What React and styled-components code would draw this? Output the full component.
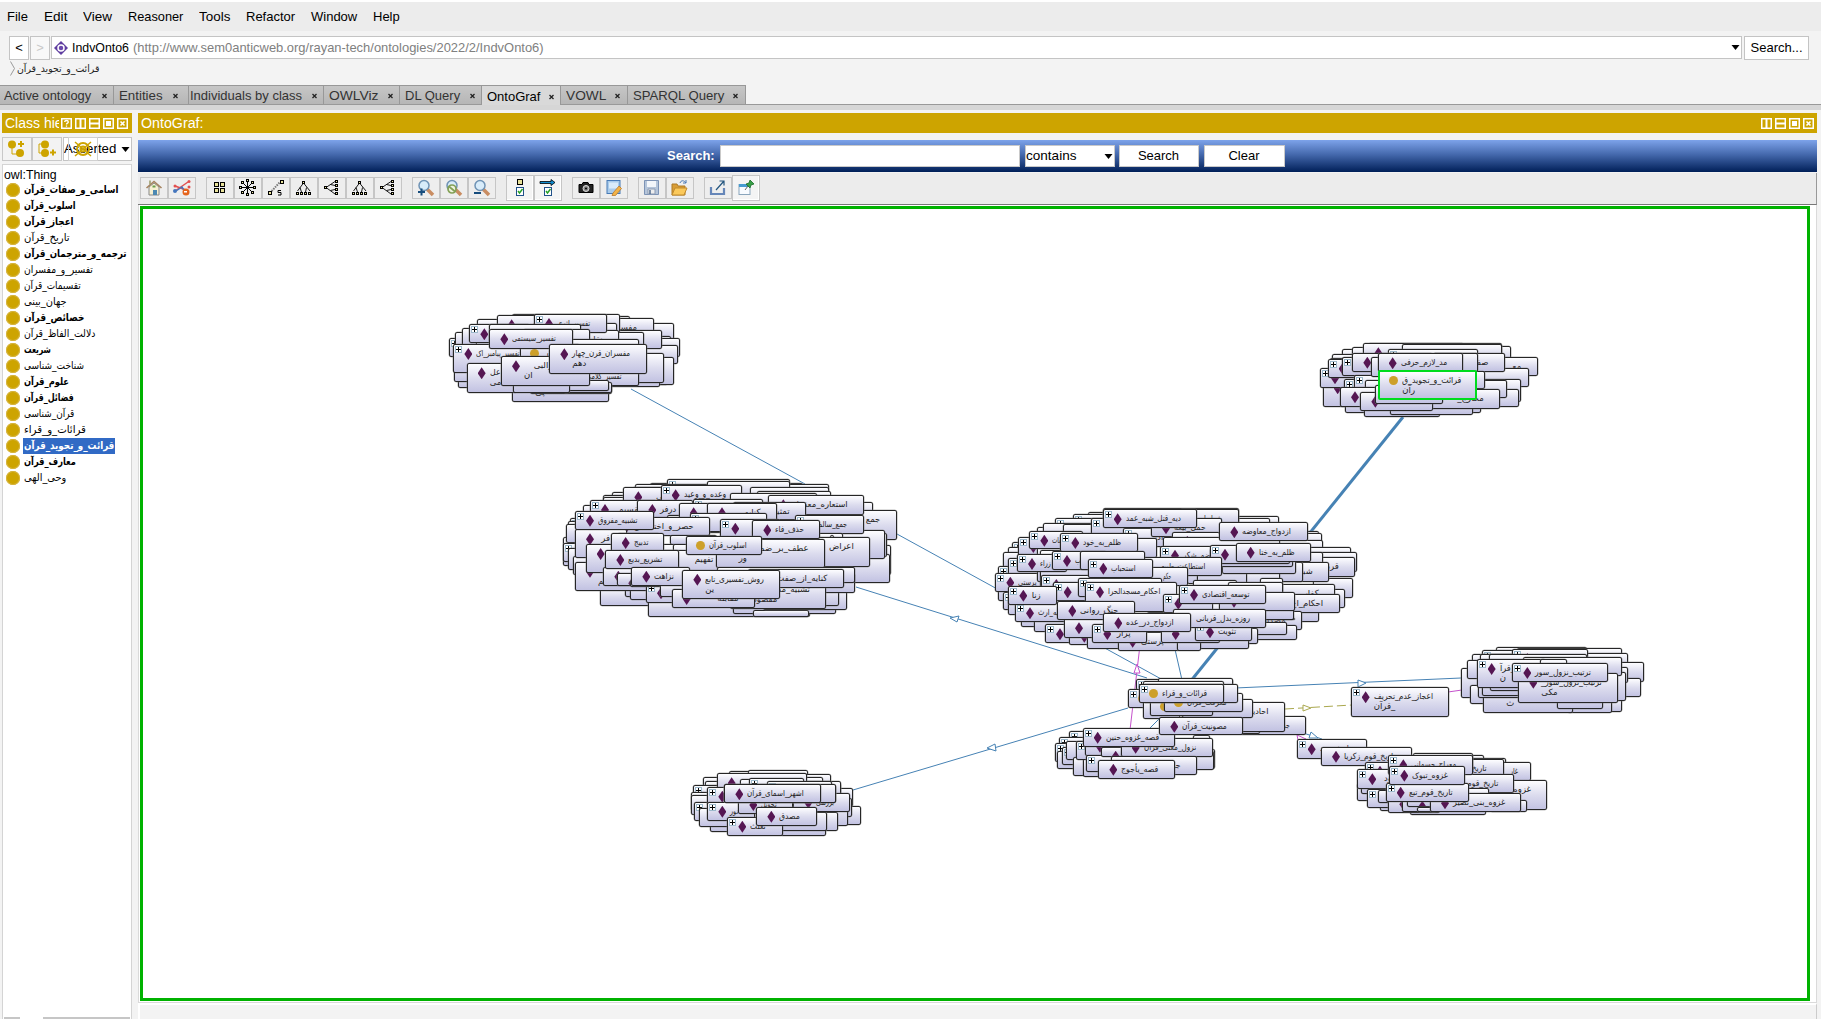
import React, { useLayoutEffect, useRef, useState } from "react";
import styled, { createGlobalStyle, css } from "styled-components";

const GlobalStyle = createGlobalStyle`
  * { box-sizing: border-box; }
  body { margin: 0; background: #f3f3f3; overflow: hidden; }
`;

const latin = `"Liberation Sans", Arial, sans-serif`;
const arabic = `"DejaVu Sans", "Noto Sans", sans-serif`;

const Shell = styled.div`
  width: 1821px;
  height: 1019px;
  overflow: hidden;
  display: flex;
  flex-direction: column;
  font: 13px/16px ${latin};
  color: #000;
  background: #f3f3f3;
`;

/* ---------- text squeezed to a known width ---------- */
const FitBox = styled.span`
  display: block;
  flex: none;
  width: ${(p) => p.$w}px;
  white-space: nowrap;
  direction: ltr;
  text-align: left;
`;
const FitInner = styled.span`
  display: inline-block;
  transform-origin: 0 50%;
`;
/* with `max`, text never stretches past that factor and keeps to the right edge instead */
function Fit({ w, max, children }) {
  const ref = useRef(null);
  const [fit, setFit] = useState({ s: 1, pad: 0 });
  useLayoutEffect(() => {
    const own = ref.current ? ref.current.offsetWidth : 0;
    if (!own) return;
    const s = max ? Math.min(max, w / own) : w / own;
    setFit({ s, pad: Math.max(0, w - own * s) });
  }, [w, max, children]);
  return (
    <FitBox $w={w}>
      <FitInner ref={ref} style={{ transform: `translateX(${fit.pad}px) scaleX(${fit.s})` }}>
        <bdi>{children}</bdi>
      </FitInner>
    </FitBox>
  );
}

/* ---------- menu, address row, breadcrumb ---------- */
const MenuBar = styled.div`
  height: 31px;
  flex: none;
  border-top: 2px solid #fff;
  background: #ececec;
  display: flex;
  align-items: center;
  gap: 16px;
  padding-left: 7px;
`;
const AddressRow = styled.div`
  height: 30px;
  flex: none;
  padding: 5px 0 0 9px;
  display: flex;
  gap: 1px;
`;
const NavButton = styled.div`
  width: ${(p) => p.$w || 20}px;
  height: 24px;
  border: 1px solid #c4c4c4;
  background: ${(p) => (p.$off ? "#f8f8f8" : "#fff")};
  color: ${(p) => (p.$off ? "#c8c8c8" : "#000")};
  display: flex;
  align-items: center;
  justify-content: center;
`;
const Address = styled.div`
  width: 1691px;
  height: 23px;
  margin: 0 1px 0 0;
  border: 1px solid #c4c4c4;
  background: #fff;
  display: flex;
  align-items: center;
  padding-left: 2px;
  color: #808080;
  b { font-weight: 400; color: #000; margin: 0 4px 0 4px; }
  & > svg:last-child { margin-left: auto; margin-right: 1px; }
`;
const Crumb = styled.div`
  height: 24px;
  flex: none;
  padding: 0 0 0 10px;
  display: flex;
  align-items: flex-start;
  font: 10px/16px ${arabic};
  color: #222;
  gap: 2px;
`;
const Tabs = styled.div`
  height: 20px;
  flex: none;
  display: flex;
  border-bottom: 1px solid #999;
`;
const Tab = styled.div`
  width: ${(p) => p.$w}px;
  height: ${(p) => (p.$on ? 20 : 19)}px;
  border: 1px solid #989898;
  border-width: 1px 1px 0 0;
  background: ${(p) => (p.$on ? "#d9d9d9" : "linear-gradient(#c6c6c6, #b6b6b6)")};
  color: ${(p) => (p.$on ? "#000" : "#333")};
  display: flex;
  align-items: center;
  justify-content: space-between;
  padding: 2px ${(p) => p.$pr ?? 6}px 0 ${(p) => p.$pl ?? 5}px;
`;
const TabStrip = styled.div`
  height: 5px;
  flex: none;
  background: #d6d6d6;
`;

/* ---------- panels ---------- */
const Main = styled.div`
  flex: 1;
  min-height: 0;
  display: flex;
  gap: 6px;
  padding: 3px 0 0 2px;
`;
const Column = styled.div`
  width: ${(p) => p.$w}px;
  display: flex;
  flex-direction: column;
`;
const TitleBar = styled.div`
  height: 20px;
  flex: none;
  background: #cda400;
  color: #fff;
  display: flex;
  align-items: center;
  justify-content: space-between;
  padding: 0 ${(p) => p.$pr ?? 4}px 0 3px;
  font-size: 14px;
`;
const TitleText = styled.div`
  width: ${(p) => p.$w}px;
  overflow: hidden;
  white-space: nowrap;
`;
const TitleIcons = styled.div`
  display: flex;
  gap: 3px;
`;
const ClassTools = styled.div`
  position: relative;
  height: 24px;
  flex: none;
  margin: 4px 0 3px;
  display: flex;
`;
const ClassButton = styled.div`
  width: 30px;
  border: 1px solid #c8c8c8;
  display: flex;
  align-items: center;
  justify-content: center;
  background: #f3f3f3;
`;
const Combo = styled.div`
  width: 69px;
  margin-left: 1px;
  border: 1px solid #c4c4c4;
  background: #fff;
  display: flex;
  align-items: center;
  justify-content: space-between;
  padding-right: 1px;
`;
const Overlap = styled.div`
  position: absolute;
  left: 66px;
  top: 0;
  width: 30px;
  height: 24px;
  border: 1px solid #d0d0d0;
  display: flex;
  align-items: center;
  justify-content: center;
`;
const Tree = styled.div`
  flex: 1;
  border: 1px solid #d4d4d4;
  border-bottom: 0;
  background: #fff;
  padding-top: 2px;
  display: flex;
  flex-direction: column;
`;
const Root = styled.div`
  height: 15px;
  line-height: 16px;
  padding-left: 1px;
`;
const TreeRow = styled.div`
  height: 16px;
  display: flex;
  align-items: center;
  gap: 3px;
  padding-left: 3px;
`;
const Dot = styled.i`
  width: 14px;
  height: 14px;
  border-radius: 50%;
  background: #cda400;
  box-shadow: inset 0 0 0 1px #d6b440;
`;
const TreeLabel = styled.div`
  font: ${(p) => (p.$b ? 700 : 400)} 10.5px/15px ${arabic};
  height: 16px;
  padding: 0 1px;
  color: ${(p) => (p.$sel ? "#fff" : "#000")};
  background: ${(p) => (p.$sel ? "#316ac5" : "transparent")};
`;
const ScrollBits = styled.div`
  margin-top: auto;
  height: 2px;
  display: flex;
  gap: 23px;
  padding: 0 1px;
  i { background: #c6c6c6; width: 16px; }
  i + i { flex: 1; }
`;

/* ---------- OntoGraf ---------- */
const SearchBar = styled.div`
  height: 32px;
  flex: none;
  margin-top: 7px;
  background: linear-gradient(#7da3ea, #4569ad 45%, #001f58);
  display: flex;
  align-items: center;
  padding: 0 0 0 529px;
`;
const SearchLabel = styled.div`
  color: #fff;
  font-weight: 700;
  width: 53px;
`;
const SearchField = styled.div`
  width: ${(p) => p.$w}px;
  height: 22px;
  margin-right: ${(p) => p.$mr}px;
  border: 1px solid #c9c9c9;
  background: #fff;
  display: flex;
  align-items: center;
  justify-content: ${(p) => p.$j || "center"};
  padding: 0 1px 0 0;
`;
const ToolBar = styled.div`
  height: 32px;
  flex: none;
  margin-top: 1px;
  background: #ececec;
  border-right: 1px solid #999;
  border-bottom: 1px solid #777;
  display: flex;
  align-items: center;
  gap: 10px;
  padding: 0 0 1px 2px;
`;
const ToolGroup = styled.div`
  display: flex;
  align-items: center;
`;
const Tool = styled.div`
  width: 28px;
  height: ${(p) => (p.$on ? 26 : 22)}px;
  border: 1px solid #c6c6c6;
  background: ${(p) => (p.$on ? "#f4f4f4" : "#eee")};
  ${(p) => p.$on && css`box-shadow: inset -1px -1px #fff;`}
  display: flex;
  align-items: center;
  justify-content: center;
`;
const Frame = styled.div`
  height: 798px;
  flex: none;
  border: 1px solid #dadada;
  border-top-width: 0;
  background: #fff;
  padding: 1px 6px 1px 1px;
  display: flex;
`;
const Canvas = styled.div`
  position: relative;
  flex: 1;
  border: 3px solid #00b200;
  background: #fff;
  overflow: hidden;
`;
const Footer = styled.div`
  flex: 1;
  border-top: 2px solid #fff;
  border-left: 2px solid #fff;
  border-right: 1px solid #ccc;
  background: #f3f3f3;
`;
const Edges = styled.svg`
  position: absolute;
  inset: 0;
`;

const U = 1 / 3;
const NodeBox = styled.div`
  position: absolute;
  left: ${(p) => p.$x}px;
  top: ${(p) => p.$y}px;
  width: ${(p) => p.$w}px;
  height: ${(p) => p.$h}px;
  border: ${(p) => (p.$hot ? "2px solid #00dc1e" : "1px solid #262626")};
  border-radius: 2px;
  box-shadow: ${(p) => (p.$hot ? "none" : "0 0 0 .3px #777")};
  background: linear-gradient(#fdfdff, #dcdcee 50%, #c2c2e2);
  overflow: hidden;
`;
const NodeIcon = styled.i`
  position: absolute;
  left: ${(p) => (p.$round ? 9 : 10)}px;
  top: ${(p) => (p.$round ? 4 : 3)}px;
  width: ${(p) => (p.$round ? 9 : 8)}px;
  height: ${(p) => (p.$round ? 9 : 12)}px;
  background: ${(p) => (p.$round ? "#cda02a" : "#551653")};
  ${(p) => (p.$round ? "border-radius: 50%;" : "clip-path: polygon(50% 0, 100% 50%, 50% 100%, 0 50%);")}
`;
const Plus = styled.i`
  position: absolute;
  left: 1px;
  top: 1px;
  width: 7px;
  height: 7px;
  border: 1px solid #9cb9cc;
  background: linear-gradient(#000, #000) center / 5px 1px no-repeat,
    linear-gradient(#000, #000) center / 1px 5px no-repeat, #fff;
`;
const NodeText = styled.div`
  position: absolute;
  left: 22px;
  top: 3px;
  font: 8.5px/10px ${arabic};
  color: #222;
  white-space: nowrap;
  text-align: left;
`;

/* node: left, top, right, bottom (thirds of a pixel), marks, line 1, line 2 */
const clusters = [
  { x: 1040, y: 640, nodes: [
    [288,118,580,175,"+"],[355,115,580,170],[265,147,500,205,"+c"],[310,180,420,238],
    [600,228,798,286,"","جمع_قرآن"],[430,230,660,282],[545,187,734,275,"","احادیث"],[425,187,600,275],[425,178,638,235],
    [330,170,520,228,"c"],[372,160,608,217,"c","معرفت_قرآن"],[310,124,551,182],[310,133,595,190],
    [297,133,551,190,"+c","قرائات_و_قراء"],
    [88,272,300,330,"+"],[58,292,250,350,"+"],[45,310,240,367,"+"],[50,333,240,388],[65,320,250,376,"+"],
    [77,302,250,360],[100,350,300,407],[130,355,300,412],[350,328,526,386],[400,333,522,390],[460,285,510,330],
    [108,302,250,359,"+"],[135,290,330,347,"d"],[139,345,300,397,"+"],[182,320,300,350,"d"],
    [242,293,518,350,"d","نزول_معنی_قرآن"],[213,347,472,404,"","جالوت"],
    [128,263,405,320,"+d","قصه_غزوه_حنین"],[175,359,404,416,"d","قصه_یأجوج"],[358,230,610,286,"d","مصونیت_قرآن"],
    [932,142,1228,230,"+d","اعجاز_عدم_تحریف","_قرآن"],
    [770,298,982,356,"+d","تاریخ_یهود"],[843,320,1116,377,"d","تاریخ_قوم_زکریا"],
    [1200,345,1332,400],[1290,353,1397,410],[1340,365,1472,424,"","غار"],[1180,358,1391,415,"","تاریخ_روم"],
    [1118,338,1298,395,"+"],[1300,421,1522,510,"","غزوه_احد"],[1160,402,1423,459,"","تاریخ_قوم_لوط"],
    [975,365,1080,420,"+d"],[952,430,1080,483],[962,410,1080,463],[952,388,1120,446,"+d","هود"],
    [1020,490,1160,512],[1110,500,1337,524],[1350,480,1462,515],[982,447,1100,504,"+"],[1015,450,1100,488],
    [1045,463,1200,520,"d"],[1085,465,1200,517],[1102,470,1200,502,"d"],[1132,500,1190,516],[1240,445,1347,500],
    [1045,346,1298,404,"+d","معراج_جسمانی"],[1170,460,1444,517,"d","غزوه_بنی_نضیر"],
    [1037,428,1287,485,"+d","تاریخ_قوم_تبع"],[1048,377,1274,434,"+d","غزوه_تبوک"],
  ]},
  { x: 430, y: 300, nodes: [
    [247,219,536,307,"","","پی"],[300,225,545,283],[58,113,350,170,"+d"],[500,70,732,130],[560,107,722,160],
    [560,113,751,170],[560,135,743,192],[500,205,715,255],[500,170,733,256],[400,206,690,262],[75,95,300,150],[95,84,300,140],[155,67,420,115],
    [142,58,420,115],[85,207,400,264],[72,190,400,245],[440,48,600,100],[450,54,671,112,"","مفسران"],[470,90,695,146],
    [245,42,570,98],[200,46,400,104,"d","نمونه"],[138,97,260,155,"+"],[118,73,300,130,"+d"],[480,68,560,110],[450,97,643,150],
    [380,90,568,148,"","نقلی"],[312,42,530,100,"+d","تفسیر_اثری"],[176,73,452,130],[280,88,479,150],[400,118,626,175],
    [560,160,701,250],[70,132,318,220,"+d","تفسیر_پیامبر_اک",""],[270,132,450,190,"c","قرآن"],
    [400,200,626,258,"","تفسیر_کلامی"],[400,245,545,280],[400,240,536,272],[110,190,261,279,"d","عل","می"],[250,190,421,279],
    [178,88,428,146,"d","تفسیر_سیستمی"],[213,169,480,258,"d","عقیدة_البی","ان"],
    [358,133,650,221,"d","مفسران_قرن_چهار","دهم"],
  ]},
  { x: 550, y: 470, nodes: [
    [300,38,760,95],[352,28,720,88,"+"],[255,43,480,100],[245,50,480,105],[620,43,838,100],[470,32,719,90],[600,50,838,100],[620,62,842,118],
    [187,66,420,120],[160,74,400,130,"+"],[160,82,380,130],[100,105,300,160],[60,145,200,200,"+"],[53,153,200,210],
    [40,200,150,288],[47,163,150,220],[860,97,968,150],[820,120,1041,209,"","جمع"],
    [860,225,1024,315],[840,252,1019,340],
    [860,190,1012,262],[780,180,1004,268,"","تضمین"],[40,218,200,276,"+d"],[55,235,200,300],
    [68,258,200,315],[150,352,366,409,"","تنکیت"],[225,340,400,380],[240,345,400,391],[295,385,780,441],[550,378,858,433],[610,420,778,441],
    [640,355,891,419],[620,352,866,409],[690,310,916,368],[540,330,829,418,"","تشبیه_مقلوب","مقصود"],
    [75,275,365,364,"d","","لم"],[288,340,440,398,"+d"],[220,52,400,110,"d","کی"],
    [332,46,577,103,"+d","وعده_و_وعید"],[540,69,800,126],[655,76,942,134,"d","استعاره_معقول"],
    [120,90,320,147,"+d","تقسیم"],[262,90,430,147,"d","درفر"],[350,135,560,190],[428,86,640,143,"+"],[386,100,560,157,"d"],
    [548,96,768,150,"","تمثیل"],[471,100,680,158,"d","کنایه"],[420,128,650,185,"+"],
    [736,136,942,193,"+","جمع_سالم"],[760,190,880,235],[184,141,480,198,"d","حصر_و_اختصاص"],[75,178,230,265,"d","فر"],[200,190,330,265],
    [75,122,311,179,"+d","تشبیه_مفروق"],[511,146,690,203,"+d","نعم"],[360,195,500,225],[840,195,852,290],
    [640,202,961,290,"","اعراض"],[107,222,378,310,"d"],[370,222,420,280],[340,240,540,310,"","تفهیم"],[497,206,824,293,"","عطف_بر_ضم","ور"],
    [607,151,811,208,"d","حذف_فاء"],[182,189,343,245,"d","تدبیج"],[407,197,637,254,"c","اسلوب_قرآن"],
    [500,290,916,340],[595,298,881,355,"","کنایه_از_صفت"],[160,290,360,347,"d"],[202,310,360,347,"d"],[240,330,370,351],
    [166,240,388,297,"d","تشریع_بدیع"],[330,340,420,382],[365,357,614,414,"d","مقابله"],[244,290,421,347,"d","نزاهت"],
    [397,299,691,387,"d","روش_تفسیری_تابع","ین"],
  ]},
  { x: 980, y: 495, nodes: [
    [325,52,600,110,"+"],[280,58,500,110,"+"],[225,70,500,125,"+"],[730,62,896,118],[700,68,869,120],[370,38,776,95],
    [170,95,400,150],[190,85,400,140],[250,87,420,140],[333,70,500,127,"+"],[900,108,1018,160],[900,115,1026,170],[860,135,1030,200],
    [95,140,240,197,"+"],[85,155,240,212],[70,172,240,229],[115,126,240,183,"+d"],[900,157,1112,215],[900,171,1130,230],
    [70,235,180,310],[1000,250,1118,308],[900,187,1125,245,"","قربانی"],[55,213,180,270,"+"],[85,190,200,247,"+"],
    [55,260,200,318],[70,290,220,346,"+"],[85,303,250,360,"+"],[46,233,220,290,"+d","پرستی"],
    [900,282,1095,340],[850,268,1065,325,"","کفار"],[820,320,1017,380],[830,298,1079,355,"","احکام_اع"],
    [740,348,965,404,"","مصداق"],[780,390,950,434],[700,380,922,420],[640,400,834,446],[640,405,806,461],
    [122,340,300,397],[162,355,300,412],[195,388,330,445,"+d"],[268,395,450,449,"d"],[322,405,500,462],
    [105,325,290,382,"+d","آیه_ارث"],[600,42,776,100,"","شرایط"],[170,150,500,260],[180,165,400,300],
    [148,107,310,163,"+d","صفات"],[430,100,600,157,"+","ادبی"],[513,70,725,127,"d","حمل_بیعه"],
    [577,110,719,167,"d"],[450,130,530,190],[550,125,900,200],[368,43,650,100,"+d","دیه_قتل_شبه_عمد"],
    [718,82,984,139,"d","ازدواج_معاوضه"],[241,114,473,171,"+d","ظلم_به_خود"],[111,177,262,232,"+d","زراء"],
    [880,170,1030,228],[860,202,1046,260,"","شبایت"],[720,200,970,260],[740,210,840,290],[780,225,900,280],
    [620,210,751,267],[650,200,800,275],[840,250,910,310],[725,180,948,237],[540,152,742,210,"+d","ضم_شکر"],[690,160,938,217],
    [690,149,930,207,"+d"],[460,185,725,242,"","استطاعت_طبیعی"],[216,168,380,225,"+d","واجب"],[300,168,496,225],
    [480,215,623,272,"","حکم"],[767,143,992,200,"d","ظلم_به_ختا"],[184,240,400,295,"+d"],[218,262,400,319,"+d"],
    [640,255,770,320],[295,248,545,305,"+"],[325,191,518,248,"+d","استحباب"],[500,350,700,420],[620,370,945,374],[690,320,943,375],
    [745,262,908,319],[717,290,945,347,"d"],[315,262,590,350,"+d","احکام_مسجدالحرا","م"],
    [550,296,700,353,"+d"],[597,270,857,327,"+d","توسعه_اقتصادی"],
    [413,410,600,467,"d","پرستی"],[590,410,663,467],[252,370,400,428,"d"],[337,387,502,443,"+d","پرار"],
    [542,387,720,444,"d"],[645,382,817,438,"+d","تثویت"],[580,343,859,398,"","روزه_بدل_قربانی"],
    [85,272,231,329,"+d","زنا"],[232,318,466,375,"d","جنگ_روانی"],[370,355,632,412,"d","ازدواج_در_عده"],
  ]},
  { x: 1300, y: 330, nodes: [
    [205,38,492,95],[127,58,400,115],[155,50,400,107],[400,48,632,105],[95,73,300,130],[520,80,713,139,"","مع"],
    [400,115,686,172],[90,84,300,140],[68,145,300,232,"d"],[60,115,300,173,"+d"],[400,148,662,215],[400,178,658,230],[500,150,620,205],
    [136,193,400,250],[192,200,420,260],[280,200,543,248],[83,86,250,143,"+d"],[125,80,300,137,"+"],[133,148,300,200,"+"],
    [190,40,605,97,"d"],[307,43,605,100],[265,58,534,115,"+"],[400,70,614,127,"","صف"],[157,68,400,125,"d"],
    [162,135,300,190,"+"],[212,82,450,140],[300,122,556,178],[194,150,400,199],[120,172,350,230,"d"],[271,198,518,255],
    [345,178,599,236,"","مخارج_"],[181,185,400,242,"d"],[226,165,428,222],[400,70,534,127],[233,70,490,127,"d","مد_لازم_حرفی"],
    [235,120,530,211,"c!","قرائت_و_تجوید_ق","رآن"],
  ]},
  { x: 1440, y: 635, nodes: [
    [168,35,440,92],[230,40,546,98],[125,44,300,100,"+"],[97,58,300,115],[63,98,300,188],[90,150,300,208],
    [82,75,300,133],[400,55,565,110],[400,82,611,140],[400,130,602,185],[400,95,565,145],[350,190,545,230],[350,110,558,198],[380,178,515,235],
    [130,147,398,235,"","","ث"],[350,165,490,223],[120,57,440,115],[217,42,443,98,"+d"],[148,57,440,115],[250,65,546,122],
    [115,133,300,190],[125,125,300,182],[150,110,300,167],[110,72,318,160,"+d","سور_قرآ","ن"],[300,72,380,160],
    [235,113,535,203,"d","ترتیب_نزول_سور_","مکی"],[217,84,503,142,"+d","ترتیب_نزول_سور"],
  ]},
  { x: 680, y: 760, nodes: [
    [148,32,380,90],[205,30,383,88],[70,50,300,110],[75,63,300,120],[250,42,453,100],[265,50,430,108],[40,75,200,130,"+"],
    [33,95,200,152,"d"],[33,105,200,165],[90,158,300,215],[70,140,300,198],[43,125,200,183,"+"],[58,143,200,200],
    [400,83,520,140],[450,138,542,194],[400,70,484,128],[320,63,484,120],[400,115,515,170],[400,130,503,198],[350,155,475,212],[300,172,438,229],
    [300,155,440,213],[110,40,380,97,"d"],[180,58,300,110],[208,53,373,110,"+"],[260,62,455,120,"+"],[340,98,511,155,"d","بررسی"],
    [330,75,469,128],[82,80,300,137,"+d"],[82,125,225,182,"+d","نور"],[175,105,340,163,"d","تخویل"],
    [133,73,469,130],[133,73,422,130,"d","اشهر_اسمای_قرآن"],[142,170,308,229,"+d","تعلث"],[229,140,410,198,"d","مصدق"],
  ]},
];

const CX = 143;
const CY = 209;

function Node({ ox, oy, n }) {
  const [x1, y1, x2, y2, marks = "", a, b] = n;
  const hot = marks.includes("!");
  return (
    <NodeBox $x={ox + x1 * U - CX} $y={oy + y1 * U - CY} $w={(x2 - x1) * U} $h={(y2 - y1) * U} $hot={hot}>
      {marks.includes("+") && <Plus />}
      {/[dc]/.test(marks) && <NodeIcon $round={marks.includes("c")} />}
      {(a || b) && (
        <NodeText>
          {a ? <Fit w={Math.max(8, (x2 - x1 - 118) * U)} max={1}>{a}</Fit> : <br />}
          {b && <bdi>{b}</bdi>}
        </NodeText>
      )}
    </NodeBox>
  );
}

const blue = "#4682b4";
function Graph() {
  return (
    <Canvas>
      <Edges width="1663" height="789" viewBox="143 209 1663 789" fill="none" stroke={blue} strokeWidth="1">
        <path d="M631 389L805 484M897 534L1163 680M856 587L1147 678M1128 708L853 790M1174 645L1182 680M1235 688L1461 678M1148 730L1160 718M1300 732L1322 739" />
        <path d="M1403 417L1190 682" strokeWidth="3" />
        <path d="M1140 645L1130 730M1448 692L1462 690" stroke="#c552cc" />
        <path d="M1285 709L1352 705" stroke="#aaa84e" strokeDasharray="9 4" />
        <path d="M950 618L959 616L957 622zM987 748L995 744L996 751zM1358 680L1366 683L1358 687zM1311 732L1318 738L1309 738z" fill="#fff" />
        <path d="M1137 664L1134 673L1140 673zM1297 735L1306 739L1298 740z" stroke="#c552cc" fill="#fff" />
        <path d="M1303 705L1311 708L1303 711z" stroke="#aaa84e" fill="#fff" />
      </Edges>
      {clusters.map((c, i) => c.nodes.map((n, j) => <Node key={`${i}-${j}`} ox={c.x} oy={c.y} n={n} />))}
    </Canvas>
  );
}

/* ---------- icons ---------- */
const Caret = () => (
  <svg width="9" height="5" viewBox="0 0 9 5"><path d="M.5 0h8L4.500 5z" fill="#000" /></svg>
);
function WinIcon({ kind }) {
  const d = {
    help: "",
    split: "M5.500 1v9",
    dash: "M1 5.500h9",
    max: "",
    close: "M3.500 3.500l4 4M7.500 3.500l-4 4",
  }[kind];
  return (
    <svg width="11" height="11" viewBox="0 0 11 11" fill="none" stroke="#fff">
      <rect x=".75" y=".75" width="9.500" height="9.500" strokeWidth="1.500" />
      {kind === "max" && <rect x="3" y="3" width="5" height="5" fill="#fff" stroke="none" />}
      {kind === "help" && <path d="M3.700 4c0-2 3.600-2 3.600 0 0 1.300-1.800 1-1.800 2.500M5.500 7.500v1.200" strokeWidth="1.300" />}
      <path d={d} strokeWidth={kind === "close" ? 1.6 : 2} />
    </svg>
  );
}
const sq = (x, y, s = 3) => <rect key={`${x},${y}`} x={x + 0.5} y={y + 0.5} width={s} height={s} fill="#e8e29a" stroke="#000" />;
const dot = (x, y) => <rect key={`${x},${y}`} x={x + 0.5} y={y + 0.5} width="2" height="2" fill="#e8e29a" stroke="#000" />;
const lens = (
  <g><path d="M10 10l6 6" stroke="#c98d62" strokeWidth="3.500" /><circle cx="7" cy="6.500" r="5" fill="#d8ecfa" stroke="#6f93b5" strokeWidth="1.500" /></g>
);
const glyphs = {
  home: <g><path d="M4 8v8h10V8L9 4z" fill="#f7f0d2" stroke="#888" /><path d="M1.500 9L9 2.500 16.500 9" fill="none" stroke="#a68460" strokeWidth="1.600" /><rect x="8" y="11" width="4" height="5" fill="#4d89b3" /><rect x="7.500" y="6.500" width="3" height="2" fill="#6a9e4d" /><path d="M5 1.500v4" stroke="#996" strokeWidth="1.500" /></g>,
  net: <g fill="none" strokeWidth="1.500"><path d="M2 7l11 4M2 12L15 3" stroke="#e34f4f" /><path d="M3 12l6-4 3 5" stroke="#4576bd" /><g stroke="none"><circle cx="2" cy="7" r="1.500" fill="#e34f4f" /><circle cx="16" cy="2.500" r="1.500" fill="#e34f4f" /><circle cx="2" cy="12" r="2" fill="#4576bd" /><circle cx="16" cy="8" r="1.500" fill="#e34f4f" /><circle cx="13" cy="13" r="3.500" fill="#e5641c" /><rect x="11" y="12" width="3" height="1.500" fill="#fff" /></g></g>,
  grid: <g>{sq(3, 3, 4)}{sq(9, 3, 4)}{sq(3, 9, 4)}{sq(9, 9, 4)}</g>,
  star: <g><path d="M8.500 2v14M2 8.500h14M3 3l11 11M14 3L3 14" stroke="#000" />{[[7, 0], [7, 14], [0, 7], [14, 7], [2, 2], [12, 2], [2, 12], [12, 12]].map(([x, y]) => sq(x, y, 2))}</g>,
  spring: <g><path d="M3 14L13 3" stroke="#777" strokeWidth="2" strokeDasharray="1.500 1" />{sq(1, 12)}{sq(13, 1)}<path d="M14 11.500h-3v2h3v2.500h-3" stroke="#000" fill="none" /></g>,
  down: <g><path d="M8.500 4L2.500 12M5 8.500L6.500 13M11.500 8.500L10.500 13M8.500 4L15 12" stroke="#000" fill="none" strokeWidth=".9" />{dot(7, 2)}{dot(1, 13)}{dot(5, 13)}{dot(9, 13)}{dot(13, 13)}</g>,
  left: <g><path d="M3 8.500L12 2.500M7.500 5.500L12 6.500M7.500 11.500L12 10.500M3 8.500L12 15" stroke="#000" strokeWidth=".9" />{dot(1, 7)}{dot(12, 1)}{dot(12, 5)}{dot(12, 9)}{dot(12, 13)}</g>,
  zin: <g>{lens}<path d="M1 13h7M4.500 9.500v7" stroke="#174d7d" strokeWidth="2" /></g>,
  zno: <g>{lens}<circle cx="7" cy="10" r="4" fill="#edf3de" stroke="#83a056" strokeWidth="1.700" /><path d="M4 7.500l6 5" stroke="#83a056" strokeWidth="1.700" /></g>,
  zout: <g>{lens}<path d="M1 14h7" stroke="#174d7d" strokeWidth="2" /></g>,
  ncheck: <g>{sq(6, 0, 5)}<rect x="5.500" y="8.500" width="7" height="8" fill="#fff" stroke="#22528a" /><path d="M7 12l1.500 2 3-4" stroke="#25a025" strokeWidth="1.400" fill="none" /></g>,
  acheck: <g><path d="M1 2.500h11V.5l4 3-4 3v-2H1z" fill="#118dd1" stroke="#000" strokeWidth=".8" /><rect x="5.500" y="8.500" width="7" height="8" fill="#fff" stroke="#22528a" /><path d="M7 12l1.500 2 3-4" stroke="#25a025" strokeWidth="1.400" fill="none" /></g>,
  camera: <g><path d="M2 5.500h3l1-2h5l1 2h4v8H2z" fill="#222" stroke="#000" /><circle cx="9" cy="9.500" r="3" fill="#888" stroke="#ddd" /><circle cx="9" cy="9.500" r="1" fill="#000" /></g>,
  edit: <g><rect x="2" y="1.500" width="13" height="13" fill="#a9cbeb" stroke="#477ab6" /><rect x="4" y="3.500" width="9" height="6" fill="#d9ebfa" /><path d="M8 14l6-7 2.500 2.500-6 7H7z" fill="#f2b348" stroke="#b97a2b" strokeWidth=".8" /></g>,
  save: <g><path d="M1.500 1.500h14v14h-14z" fill="#b5c5da" stroke="#7d93b5" /><path d="M4 2h9v6H4z" fill="#f3f6fa" /><path d="M5 10h7v5H5z" fill="#eee" stroke="#8c9bb3" /><path d="M7 11v4" stroke="#526c8f" strokeWidth="1.500" /></g>,
  open: <g><path d="M1 5h5l1 2h7v9H1z" fill="#d99d35" stroke="#ae7b26" /><path d="M1 16l3-7h12l-3 7z" fill="#fbc95b" stroke="#c18a2c" /><path d="M9 4c1-3 4-3 6 0M15 1v3h-3" fill="none" stroke="#4878b5" /></g>,
  export: <g><path d="M2 8v7h13V9" fill="none" stroke="#6686b8" strokeWidth="2.200" /><path d="M7 11l8-9M10.500 2H15v4.500" fill="none" stroke="#23557e" strokeWidth="1.200" /></g>,
  pin: <g><rect x="2" y="5.500" width="11" height="10" fill="#f8fbff" stroke="#8aa5bc" /><rect x="2" y="5" width="11" height="3" fill="#489bd0" /><path d="M8 11l3-4" stroke="#666" /><path d="M9 5l3-1 1-3 4 4-3 1-1 3z" fill="#38a047" stroke="#1b6d2b" strokeWidth=".8" /></g>,
};
const ToolIcon = ({ name }) => <svg width="18" height="18" viewBox="0 0 18 18">{glyphs[name]}</svg>;

const groups = [
  ["home", "net"],
  ["grid", "star", "spring", "down", "left", "down", "left"],
  ["zin", "zno", "zout"],
  ["ncheck*", "acheck*"],
  ["camera", "edit"],
  ["save", "open"],
  ["export", "pin*"],
];
const ClassIcon = ({ alt }) => (
  <svg width="20" height="18" viewBox="0 0 20 18" fill="#cda400">
    {alt ? <path d="M8 4H2v9h4" fill="none" stroke="#cda400" /> : <path d="M5 5v9h6" fill="none" stroke="#cda400" />}
    {alt ? <g><circle cx="8" cy="4.500" r="4" /><circle cx="8" cy="13" r="4" /></g> : <g><circle cx="5" cy="4.500" r="4" /><circle cx="13" cy="13" r="4" /></g>}
    <path d={alt ? "M13 12.500h6M16 9.500v6" : "M11 4h6M14 1v6"} stroke="#cda400" strokeWidth="2" />
  </svg>
);

const menus = [["File", 21], ["Edit", 23], ["View", 29], ["Reasoner", 55], ["Tools", 31], ["Refactor", 49], ["Window", 46], ["Help", 27]];
/* label, tab width, text width, left and right padding */
const tabs = [
  ["Active ontology", 114, 87, 4], ["Entities", 75, 44, 5, 10], ["Individuals by class", 135, 112, 1], ["OWLViz", 76, 49], ["DL Query", 82, 55],
  ["OntoGraf", 79, 53, 5], ["VOWL", 67, 40, 5, 7], ["SPARQL Query", 118, 91, 5, 7],
];
const classes = [
  ["اسامی_و_صفات_قرآن", 94, 1], ["اسلوب_قرآن", 52, 1], ["اعجاز_قرآن", 50, 1], ["تاریخ_قرآن", 46], ["ترجمه_و_مترجمان_قرآن", 103, 1],
  ["تفسیر_و_مفسران", 69], ["تقسیمات_قرآن", 57], ["جهان_بینی", 43], ["خصائص_قرآن", 60, 1], ["دلالت_الفاظ_قرآن", 71], ["شریعت", 27, 1],
  ["شناخت_شناسی", 60], ["علوم_قرآن", 45, 1], ["فضائل_قرآن", 50, 1], ["قرآن_شناسی", 50], ["قرائات_و_قراء", 62],
  ["قرائت_و_تجوید_قرآن", 90, 1, 1], ["معارف_قرآن", 52, 1], ["وحی_الهی", 42],
];

export default function App() {
  return (
    <Shell>
      <GlobalStyle />
      <MenuBar>{menus.map(([t, w]) => <Fit key={t} w={w}>{t}</Fit>)}</MenuBar>
      <AddressRow>
        <NavButton>&lt;</NavButton>
        <NavButton $off>&gt;</NavButton>
        <Address>
          <svg width="14" height="14" viewBox="0 0 14 14"><path d="M7 0l7 7-7 7-7-7z" fill="#5f3da0" /><circle cx="7" cy="7" r="3" fill="#6c49ac" stroke="#fff" strokeWidth="1.500" /></svg>
          <b><Fit w={57}>IndvOnto6</Fit></b>
          <Fit w={411}>(http://www.sem0anticweb.org/rayan-tech/ontologies/2022/2/IndvOnto6)</Fit>
          <Caret />
        </Address>
        <NavButton $w={65}><Fit w={52}>Search...</Fit></NavButton>
      </AddressRow>
      <Crumb>
        <svg width="5" height="15" viewBox="0 0 5 15"><path d="M.5.5l4 7-4 7" fill="none" stroke="#999" /></svg>
        <Fit w={82}>قرائت_و_تجوید_قرآن</Fit>
      </Crumb>
      <Tabs>
        {tabs.map(([t, w, tw, pl, pr]) => (
          <Tab key={t} $w={w} $pl={pl} $pr={pr} $on={t === "OntoGraf"}>
            <Fit w={tw}>{t}</Fit>
            <svg width="5" height="6" viewBox="0 0 5 6"><path d="M.5 1l4 4M4.500 1l-4 4" stroke="#222" strokeWidth="1.300" /></svg>
          </Tab>
        ))}
      </Tabs>
      <TabStrip />
      <Main>
        <Column $w={130}>
          <TitleBar>
            <TitleText $w={54}>Class hierarchy</TitleText>
            <TitleIcons>{["help", "split", "dash", "max", "close"].map((k) => <WinIcon key={k} kind={k} />)}</TitleIcons>
          </TitleBar>
          <ClassTools>
            <ClassButton><ClassIcon /></ClassButton>
            <ClassButton><ClassIcon alt /></ClassButton>
            <Combo><Fit w={52}>Asserted</Fit><Caret /></Combo>
            <Overlap>
              <svg width="18" height="18" viewBox="0 0 18 18" fill="none" stroke="#cda400" strokeWidth="2"><circle cx="9" cy="9" r="6" /><circle cx="9" cy="9" r="2.500" /><path d="M1 2l16 14M17 2L1 16" strokeWidth="1.500" /></svg>
            </Overlap>
          </ClassTools>
          <Tree>
            <Root><Fit w={53}>owl:Thing</Fit></Root>
            {classes.map(([t, w, b, sel]) => (
              <TreeRow key={t}>
                <Dot />
                <TreeLabel $b={b} $sel={sel}><Fit w={w}>{t}</Fit></TreeLabel>
              </TreeRow>
            ))}
            <ScrollBits><i /><i /></ScrollBits>
          </Tree>
        </Column>
        <Column $w={1679}>
          <TitleBar $pr={3}>
            <TitleText $w={90}><Fit w={62}>OntoGraf:</Fit></TitleText>
            <TitleIcons>{["split", "dash", "max", "close"].map((k) => <WinIcon key={k} kind={k} />)}</TitleIcons>
          </TitleBar>
          <SearchBar>
            <SearchLabel><Fit w={48}>Search:</Fit></SearchLabel>
            <SearchField $w={300} $mr={5} />
            <SearchField $w={90} $mr={4} $j="space-between"><Fit w={50}>contains</Fit><Caret /></SearchField>
            <SearchField $w={80} $mr={5}>Search</SearchField>
            <SearchField $w={81} $mr={0}>Clear</SearchField>
          </SearchBar>
          <ToolBar>
            {groups.map((g, i) => (
              <ToolGroup key={i}>
                {g.map((k, j) => <Tool key={j} $on={k.endsWith("*")}><ToolIcon name={k.replace("*", "")} /></Tool>)}
              </ToolGroup>
            ))}
          </ToolBar>
          <Frame><Graph /></Frame>
          <Footer />
        </Column>
      </Main>
    </Shell>
  );
}
